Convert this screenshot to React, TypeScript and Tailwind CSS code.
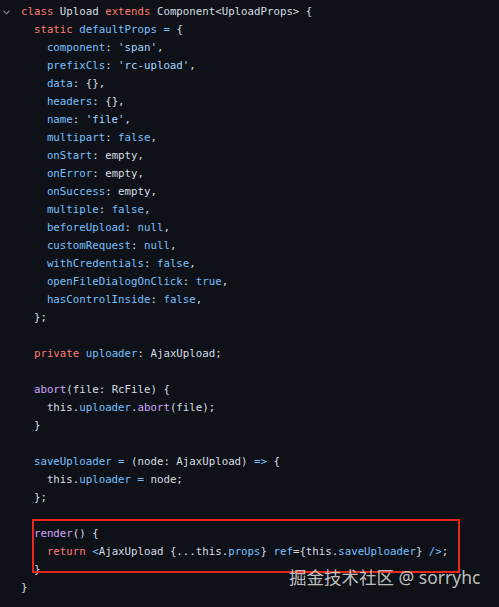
type Tok = [string, string?];

const K = "text-[#ff7b72]"; // keyword
const P = "text-[#79c0ff]"; // property / operator
const F = "text-[#d2a8ff]"; // function
const S = "text-[#a5d6ff]"; // string

const prop = (name: string, value: Tok[]): Tok[] => [["    "], [name, P], [": "], ...value, [","]];

const lines: Tok[][] = [
  [["class", K], [" Upload "], ["extends", K], [" Component<UploadProps> {"]],
  [["  "], ["static", K], [" "], ["defaultProps", P], [" "], ["=", P], [" {"]],
  prop("component", [["'span'", S]]),
  prop("prefixCls", [["'rc-upload'", S]]),
  prop("data", [["{}"]]),
  prop("headers", [["{}"]]),
  prop("name", [["'file'", S]]),
  prop("multipart", [["false", P]]),
  prop("onStart", [["empty"]]),
  prop("onError", [["empty"]]),
  prop("onSuccess", [["empty"]]),
  prop("multiple", [["false", P]]),
  prop("beforeUpload", [["null", P]]),
  prop("customRequest", [["null", P]]),
  prop("withCredentials", [["false", P]]),
  prop("openFileDialogOnClick", [["true", P]]),
  prop("hasControlInside", [["false", P]]),
  [["  };"]],
  [],
  [["  "], ["private", K], [" "], ["uploader", P], [": AjaxUpload;"]],
  [],
  [["  "], ["abort", F], ["(file: RcFile) {"]],
  [["    this."], ["uploader", P], ["."], ["abort", F], ["(file);"]],
  [["  }"]],
  [],
  [["  "], ["saveUploader", P], [" "], ["=", P], [" (node: AjaxUpload) "], ["=>", P], [" {"]],
  [["    this."], ["uploader", P], [" "], ["=", P], [" node;"]],
  [["  };"]],
  [],
  [["  "], ["render", F], ["() {"]],
  [
    ["    "],
    ["return", K],
    [" "],
    ["<", P],
    ["AjaxUpload {...this."],
    ["props", P],
    ["} "],
    ["ref", P],
    ["={this."],
    ["saveUploader", P],
    ["} "],
    ["/>", P],
    [";"],
  ],
  [["  }"]],
  [["}"]],
];

export default function App() {
  return (
    <div className="relative w-[499px] h-[607px] overflow-hidden bg-[#0e1117]">
      {/* code */}
      <div className="pt-[3px] font-['DejaVu_Sans_Mono',monospace] text-[10.75px] text-[#d7dde4]">
        {lines.map((line, i) => (
          <div key={i} className="flex h-[18px] items-center">
            <div className="flex w-[21px] shrink-0 items-center pl-[3px]">
              {i === 0 && (
                <svg width="7" height="5" viewBox="0 0 7 5" className="text-[#8b949e]">
                  <path d="M0.7 0.8 L3.5 3.8 L6.3 0.8" fill="none" stroke="currentColor" strokeWidth="1.1" />
                </svg>
              )}
            </div>
            <div className="whitespace-pre">
              {line.map(([t, c], j) => (
                <span key={j} className={c}>
                  {t}
                </span>
              ))}
            </div>
          </div>
        ))}
      </div>

      {/* highlight box */}
      <div className="absolute left-[32px] top-[519px] h-[54px] w-[428px] border-[2.5px] border-[#e8261c]" />

      {/* watermark */}
      <div className="absolute left-[289px] top-[565px] font-['Noto_Sans','Noto_Sans_CJK_SC',sans-serif] text-[17.5px] leading-[24px] text-[#d6d6d6]/90">
        掘金技术社区 @ sorryhc
      </div>
    </div>
  );
}
